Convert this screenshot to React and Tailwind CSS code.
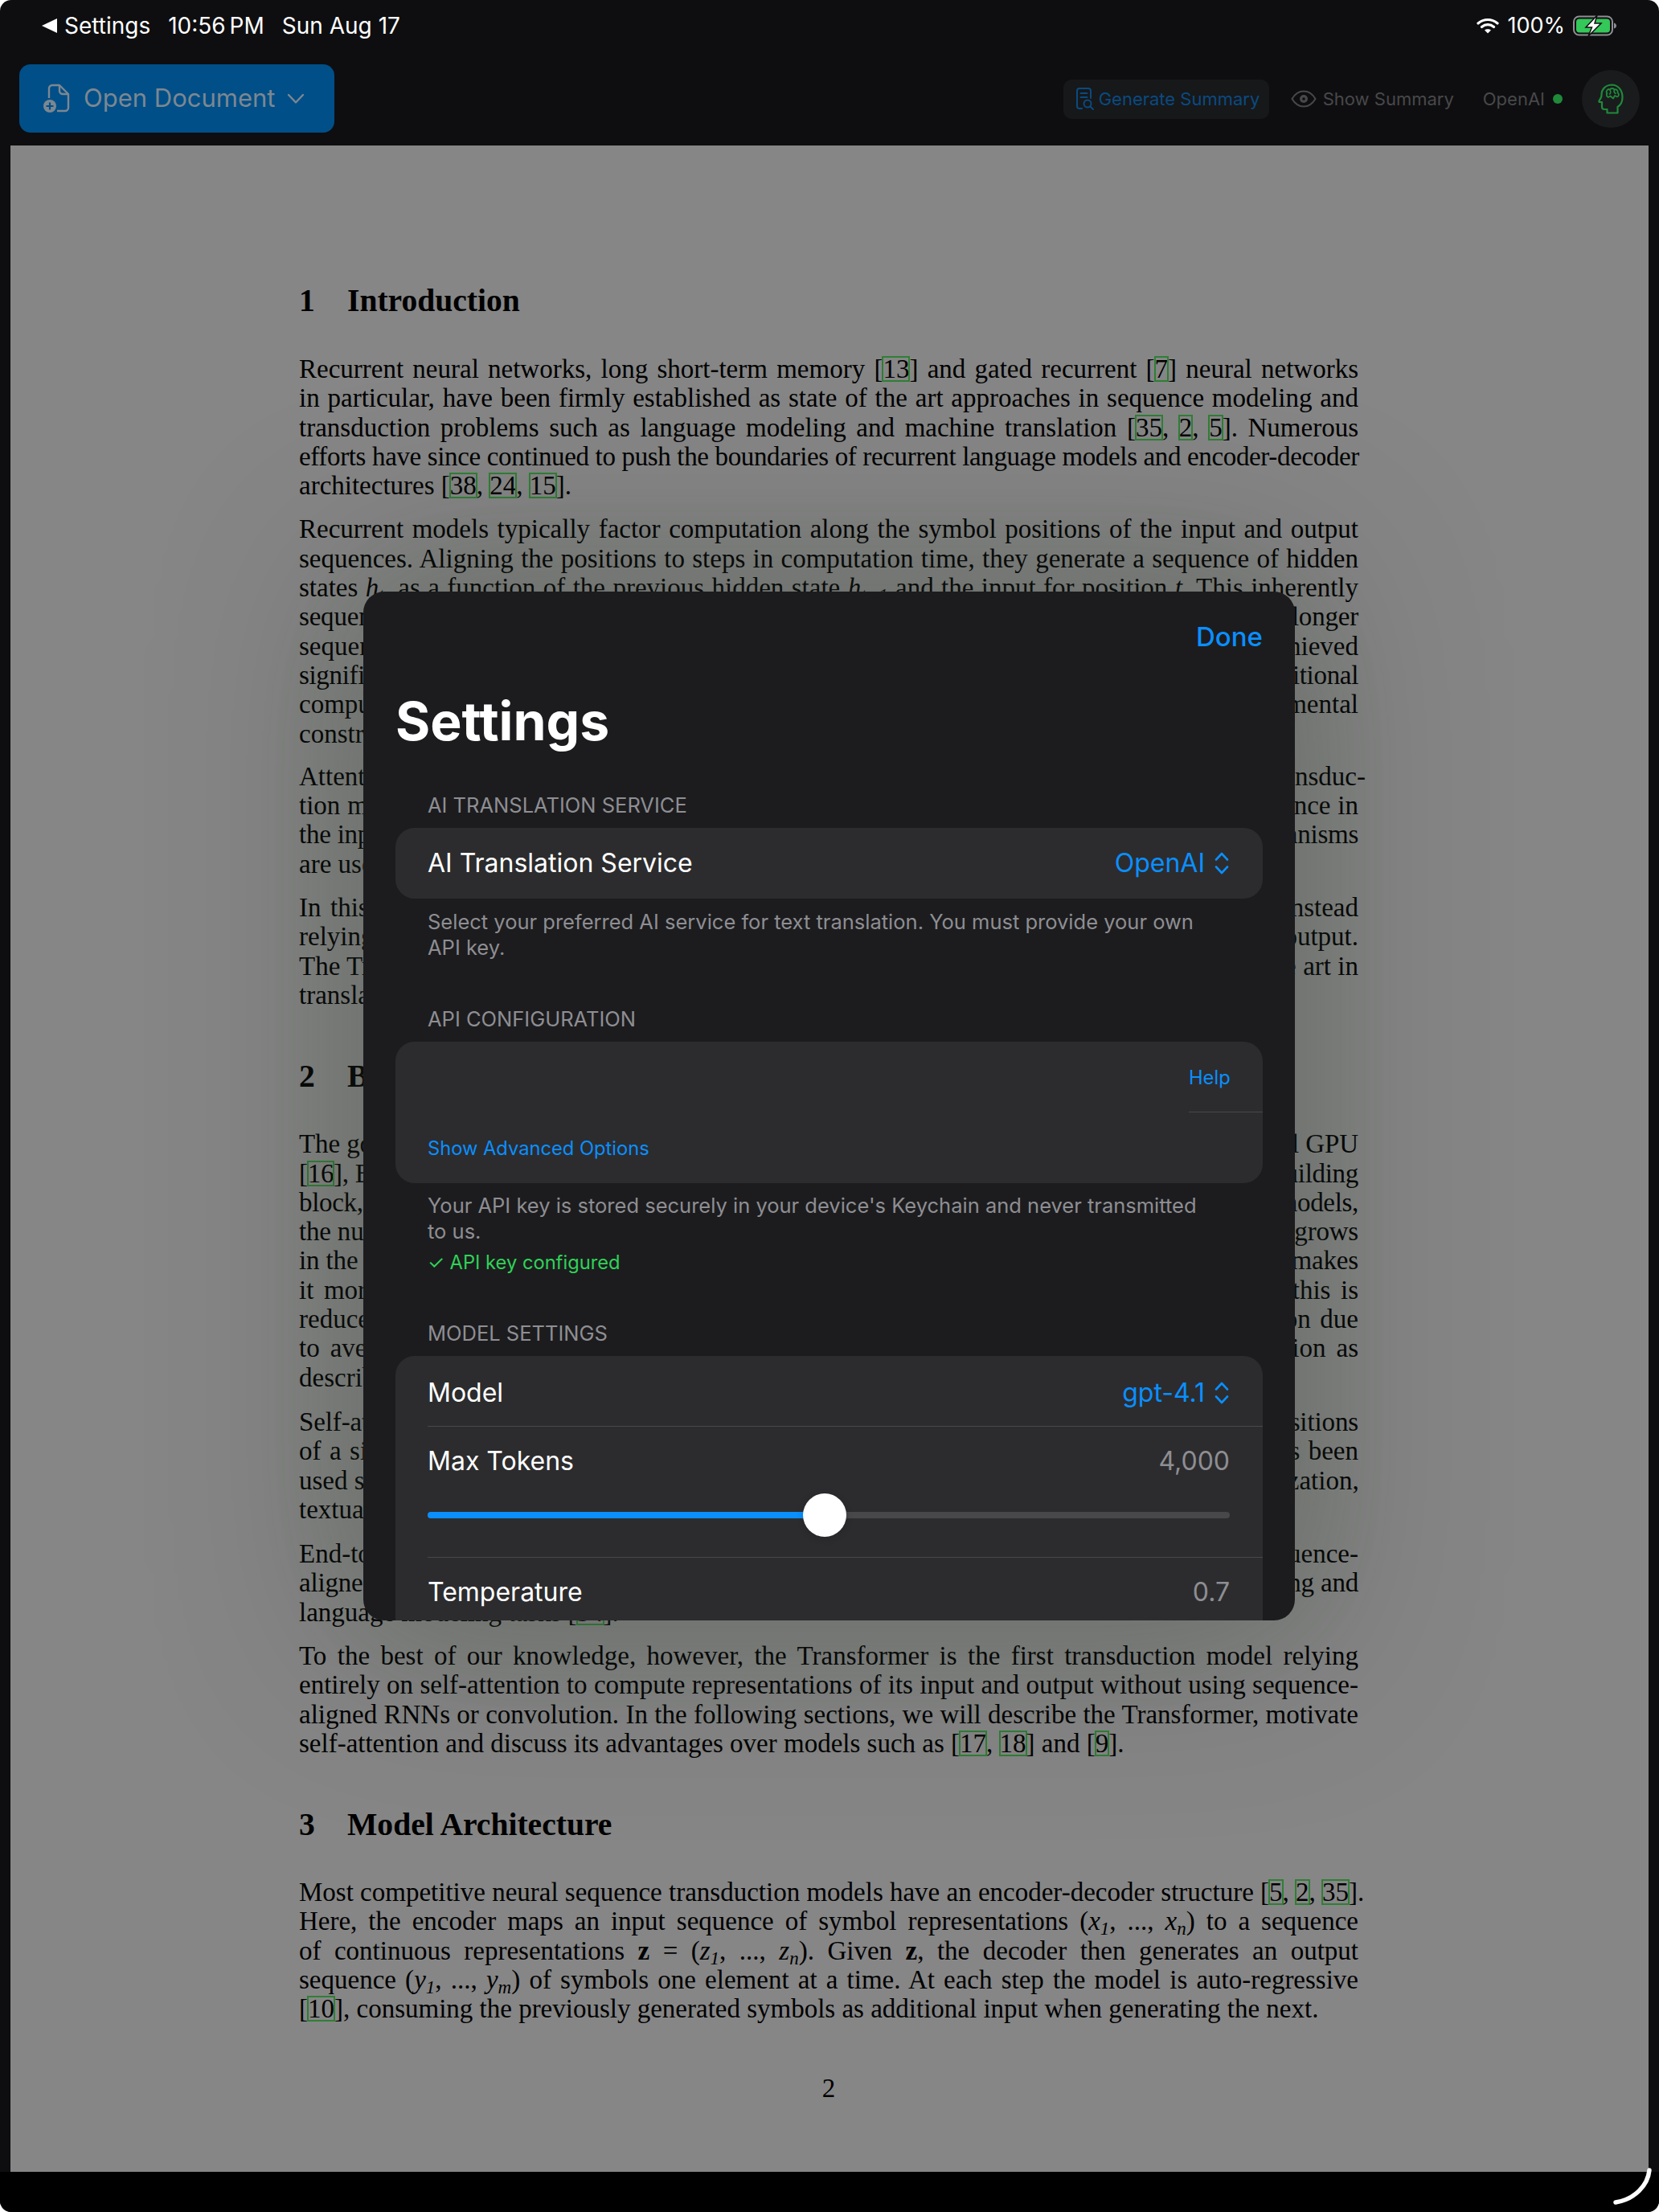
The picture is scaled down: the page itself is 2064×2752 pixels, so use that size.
import React from 'react';

// citation box as drawn by the PDF viewer
const C = ({ children }) => (
  <span className="inline-block leading-[30px] outline-2 -outline-offset-1 outline-[#2f7f35]">{children}</span>
);

const I = ({ children, sub }) => (
  <>
    <i>{children}</i>
    {sub && <sub className="text-[23px] italic">{sub}</sub>}
  </>
);

// justified line of the page, className squeezes the lines that would overflow
const L = ({ children, className = '' }) => (
  <div className={`whitespace-nowrap [text-align:justify] [text-align-last:justify] ${className}`}>{children}</div>
);

// last line of a paragraph, not stretched
const E = ({ children }) => <div className="whitespace-nowrap">{children}</div>;

const H = ({ num, children, className }) => (
  <div className={`flex text-[39.6px] font-bold leading-[46px] ${className}`}>
    <span className="w-[60px]">{num}</span>
    <span>{children}</span>
  </div>
);

const P = ({ children, className }) => <div className={className}>{children}</div>;

const DocumentPage = () => (
  <div className="flex-1 bg-[#868686] pl-[359px] pt-[170px] text-[33px] leading-[36.3px] text-black [font-family:'Liberation_Serif',serif] overflow-hidden">
    <div className="w-[1318px]">
      <H num="1">Introduction</H>
      <P className="mt-[44px]">
        <L>Recurrent neural networks, long short-term memory [<C>13</C>] and gated recurrent [<C>7</C>] neural networks</L>
        <L>in particular, have been firmly established as state of the art approaches in sequence modeling and</L>
        <L>transduction problems such as language modeling and machine translation [<C>35</C>, <C>2</C>, <C>5</C>]. Numerous</L>
        <L className="tracking-[-0.35px]">efforts have since continued to push the boundaries of recurrent language models and encoder-decoder</L>
        <E>architectures [<C>38</C>, <C>24</C>, <C>15</C>].</E>
      </P>
      <P className="mt-[18px]">
        <L>Recurrent models typically factor computation along the symbol positions of the input and output</L>
        <L>sequences. Aligning the positions to steps in computation time, they generate a sequence of hidden</L>
        <L>states <I sub="t">h</I>, as a function of the previous hidden state <I sub="t−1">h</I> and the input for position <i>t</i>. This inherently</L>
        <L className="tracking-[-0.2px]">sequential nature precludes parallelization within training examples, which becomes critical at longer</L>
        <L>sequence lengths, as memory constraints limit batching across examples. Recent work has achieved</L>
        <L className="tracking-[-0.32px]">significant improvements in computational efficiency through factorization tricks [21] and conditional</L>
        <L>computation [32], while also improving model performance in case of the latter. The fundamental</L>
        <E>constraint of sequential computation, however, remains.</E>
      </P>
      <P className="mt-[17px]">
        <L>Attention mechanisms have become an integral part of compelling sequence modeling and transduc-</L>
        <L>tion models in various tasks, allowing modeling of dependencies without regard to their distance in</L>
        <L className="tracking-[-0.25px]">the input or output sequences [2, 19]. In all but a few cases [27], however, such attention mechanisms</L>
        <E>are used in conjunction with a recurrent network.</E>
      </P>
      <P className="mt-[18px]">
        <L>In this work we propose the Transformer, a model architecture eschewing recurrence and instead</L>
        <L>relying entirely on an attention mechanism to draw global dependencies between input and output.</L>
        <L>The Transformer allows for significantly more parallelization and can reach a new state of the art in</L>
        <E>translation.</E>
      </P>
      <H num="2" className="mt-[60px]">Background</H>
      <P className="mt-[43px]">
        <L className="tracking-[-0.1px]">The goal of reducing sequential computation also forms the foundation of the Extended Neural GPU</L>
        <L className="tracking-[-0.3px]">[<C>16</C>], ByteNet [18] and ConvS2S [9], all of which use convolutional neural networks as basic building</L>
        <L className="tracking-[-0.32px]">block, computing hidden representations in parallel for all input and output positions. In these models,</L>
        <L className="tracking-[-0.2px]">the number of operations required to relate signals from two arbitrary input or output positions grows</L>
        <L className="tracking-[-0.14px]">in the distance between positions, linearly for ConvS2S and logarithmically for ByteNet. This makes</L>
        <L>it more difficult to learn dependencies between distant positions [12]. In the Transformer this is</L>
        <L>reduced to a constant number of operations, albeit at the cost of reduced effective resolution due</L>
        <L>to averaging attention-weighted positions, an effect we counteract with Multi-Head Attention as</L>
        <E>described in section 3.2.</E>
      </P>
      <P className="mt-[19px]">
        <L className="tracking-[-0.12px]">Self-attention, sometimes called intra-attention is an attention mechanism relating different positions</L>
        <L>of a single sequence in order to compute a representation of the sequence. Self-attention has been</L>
        <L>used successfully in a variety of tasks including reading comprehension, abstractive summarization,</L>
        <E>textual entailment and learning task-independent sentence representations [4, 27, 28, 22].</E>
      </P>
      <P className="mt-[19px]">
        <L>End-to-end memory networks are based on a recurrent attention mechanism instead of sequence-</L>
        <L className="tracking-[-0.2px]">aligned recurrence and have been shown to perform well on simple-language question answering and</L>
        <E>language modeling tasks [<C>34</C>].</E>
      </P>
      <P className="mt-[18px]">
        <L>To the best of our knowledge, however, the Transformer is the first transduction model relying</L>
        <L>entirely on self-attention to compute representations of its input and output without using sequence-</L>
        <L>aligned RNNs or convolution. In the following sections, we will describe the Transformer, motivate</L>
        <E>self-attention and discuss its advantages over models such as [<C>17</C>, <C>18</C>] and [<C>9</C>].</E>
      </P>
      <H num="3" className="mt-[60px]">Model Architecture</H>
      <P className="mt-[43px]">
        <L>Most competitive neural sequence transduction models have an encoder-decoder structure [<C>5</C>, <C>2</C>, <C>35</C>].</L>
        <L>Here, the encoder maps an input sequence of symbol representations (<I sub="1">x</I>, ..., <I sub="n">x</I>) to a sequence</L>
        <L>of continuous representations <b>z</b> = (<I sub="1">z</I>, ..., <I sub="n">z</I>). Given <b>z</b>, the decoder then generates an output</L>
        <L>sequence (<I sub="1">y</I>, ..., <I sub="m">y</I>) of symbols one element at a time. At each step the model is auto-regressive</L>
        <E>[<C>10</C>], consuming the previously generated symbols as additional input when generating the next.</E>
      </P>
      <div className="mt-[62px] text-center">2</div>
    </div>
  </div>
);

const DocPlusIcon = () => (
  <svg width="36" height="38" viewBox="0 0 36 38" fill="none" stroke="currentColor" strokeWidth="2.4" strokeLinejoin="round">
    <path d="M8 18V6a4 4 0 0 1 4-4h9l11 11v17a4 4 0 0 1-4 4H18" />
    <path d="M21 2v7a4 4 0 0 0 4 4h7" />
    <circle cx="9" cy="28" r="8" fill="currentColor" stroke="none" />
    <path d="M9 23.5v9M4.5 28h9" stroke="#004f88" strokeWidth="2.2" />
  </svg>
);

const DocSearchIcon = () => (
  <svg width="24" height="30" viewBox="0 0 24 30" fill="none" stroke="currentColor" strokeWidth="2" strokeLinecap="round">
    <path d="M8 27H5a3 3 0 0 1-3-3V5a3 3 0 0 1 3-3h11a3 3 0 0 1 3 3v9" />
    <path d="M6.5 8h8M6.5 13h8" />
    <circle cx="15" cy="21" r="4.5" />
    <path d="M18.5 24.5l3.5 3.5" />
  </svg>
);

const EyeIcon = () => (
  <svg width="32" height="22" viewBox="0 0 32 22" fill="none" stroke="currentColor" strokeWidth="2">
    <path d="M1.5 11C5 5 10 1.5 16 1.5S27 5 30.5 11C27 17 22 20.5 16 20.5S5 17 1.5 11z" />
    <circle cx="16" cy="11" r="5" fill="currentColor" stroke="none" />
    <circle cx="16" cy="11" r="1.8" fill="#0e0e10" stroke="none" />
  </svg>
);

const BrainHeadIcon = () => (
  <svg width="32" height="38" viewBox="0 0 32 38" fill="none" stroke="currentColor" strokeWidth="2.2" strokeLinejoin="round" strokeLinecap="round">
    <path d="M18 1.5C9.5 1.5 4.5 7 4.5 14c0 2-.4 3-1.2 4.4L1.5 21.5c-.4.8 0 1.5 1 1.5h2.5v6c0 2 1.4 3 3 3h3.5v4.5h13V29c3.5-2.2 6-6.2 6-12 0-9-5.5-15.500-13.500-15.500z" />
    <path d="M11 12c-1.500-3 1.500-6 4-4.500 1-2 4.500-2 5.500 0 2.500-1 5 1.500 4 4 2 1 2 4-.5 5l-3-1.500-2 3.500-3.500-3-2.500 1.500c-2-.5-3-3.500-1.500-5z" strokeWidth="1.8" />
    <path d="M15 8.500c1.500 1.500 1 3.500-.5 4.500M20.500 8c-1 2 0 3.500 1.500 4.500" strokeWidth="1.6" />
  </svg>
);

const Chevrons = () => (
  <svg width="20" height="30" viewBox="0 0 20 30" fill="none" stroke="currentColor" strokeWidth="2.6" strokeLinecap="round" strokeLinejoin="round">
    <path d="M3 10.500L10 3l7 7.500M3 19.500L10 27l7-7.500" />
  </svg>
);

const StatusBar = () => (
  <div className="flex h-[64px] items-center justify-between pl-[52px] pr-[52px] text-[28px] text-white">
    <div className="flex items-center">
      <svg width="19" height="18" viewBox="0 0 19 18" className="mr-[9px]">
        <path d="M0 9L19 0v18z" fill="#fff" />
      </svg>
      <span>Settings</span>
      <span className="ml-[22px] [word-spacing:-3px]">10:56 PM</span>
      <span className="ml-[22px]">Sun Aug 17</span>
    </div>
    <div className="flex items-center">
      <svg width="28" height="20" viewBox="0 0 28 20" fill="none" stroke="#fff" strokeWidth="3.200" strokeLinecap="round">
        <path d="M2 7c7-6 17-6 24 0M6.500 11.500c4.500-3.800 10.500-3.800 15 0" />
        <path d="M14 19.500l-4-4c2.300-1.800 5.700-1.800 8 0z" fill="#fff" stroke="none" />
      </svg>
      <span className="ml-[10px] text-[27px]">100%</span>
      <svg width="55" height="26" viewBox="0 0 55 26" className="ml-[10px]">
        <rect x="1" y="1.500" width="48" height="23" rx="6.500" fill="none" stroke="#8e8e93" strokeWidth="2" />
        <rect x="4" y="4.500" width="42" height="17" rx="4" fill="#34c759" />
        <path d="M51 9.500c2 .5 3 2 3 3.500s-1 3-3 3.500z" fill="#8e8e93" />
        <path d="M30 0L16 15h7.500L19 26l16-16h-8z" fill="#fff" stroke="#0e0e10" strokeWidth="1.500" />
      </svg>
    </div>
  </div>
);

const Toolbar = () => (
  <div className="flex h-[117px] items-start justify-between pl-[24px] pr-[24px] pt-[16px]">
    <div className="flex h-[85px] w-[392px] items-center rounded-[14px] bg-[#004f88] pl-[29px] text-[#7c8791]">
      <DocPlusIcon />
      <span className="ml-[15px] text-[31px]">Open Document</span>
      <svg width="22" height="14" viewBox="0 0 22 14" fill="none" stroke="currentColor" strokeWidth="2.400" strokeLinecap="round" strokeLinejoin="round" className="ml-[15px]">
        <path d="M2 2l9 9.500L20 2" />
      </svg>
    </div>
    <div className="mt-[7px] flex h-[72px] items-center text-[22px]">
      <div className="flex h-[49px] w-[256px] items-center rounded-[10px] bg-[#17181a] pl-[15px] text-[#0a4a80]">
        <DocSearchIcon />
        <span className="ml-[5px]">Generate Summary</span>
      </div>
      <div className="ml-[27px] flex items-center text-[#48484a]">
        <EyeIcon />
        <span className="ml-[8px]">Show Summary</span>
      </div>
      <span className="ml-[36px] text-[#48484a]">OpenAI</span>
      <span className="ml-[10px] h-[12px] w-[12px] rounded-full bg-[#1f8a3a]" />
      <div className="ml-[24px] flex h-[72px] w-[72px] items-center justify-center rounded-full bg-[#1a1b1d] text-[#1f8a3a]">
        <BrainHeadIcon />
      </div>
    </div>
  </div>
);

const SectionHeader = ({ children, className }) => (
  <div className={`mb-[11px] h-[34px] pl-[40px] text-[25.500px] leading-[34px] text-[#8e8e93] ${className}`}>{children}</div>
);

const Footnote = ({ children, className }) => (
  <div className={`pl-[40px] pr-[60px] text-[25.500px] leading-[32px] text-[#8e8e93] ${className}`}>{children}</div>
);

const Picker = ({ value }) => (
  <div className="flex items-center gap-[11px] text-[#0a8fff]">
    <span>{value}</span>
    <Chevrons />
  </div>
);

const SettingsModal = () => (
  <div className="absolute left-[452px] top-[736px] h-[1280px] w-[1159px] overflow-hidden rounded-[26px] bg-[#1c1c1e] px-[40px] shadow-[0_0_220px_30px_rgba(50,62,50,0.38)]">
    <div className="flex h-[114px] items-center justify-end text-[33px] font-medium text-[#0a8fff]">Done</div>
    <div className="h-[94px] text-[66px] font-bold leading-[94px] text-white">Settings</div>

    <SectionHeader className="mt-[41px]">AI TRANSLATION SERVICE</SectionHeader>
    <div className="flex h-[88px] items-center justify-between rounded-[24px] bg-[#2c2c2e] pl-[40px] pr-[41px] text-[32px] text-white">
      <span>AI Translation Service</span>
      <Picker value="OpenAI" />
    </div>
    <Footnote className="mt-[13px]">Select your preferred AI service for text translation. You must provide your own API key.</Footnote>

    <SectionHeader className="mt-[56px]">API CONFIGURATION</SectionHeader>
    <div className="h-[176px] rounded-[24px] bg-[#2c2c2e] text-[23.700px] text-[#0a8fff]">
      <div className="flex justify-end">
        <div className="flex h-[88px] w-[92px] items-center border-b border-[#48484a] pt-[3px]">Help</div>
      </div>
      <div className="flex h-[88px] items-center pl-[40px] pt-[1px]">Show Advanced Options</div>
    </div>
    <Footnote className="mt-[12px]">Your API key is stored securely in your device's Keychain and never transmitted to us.</Footnote>
    <div className="mt-[7px] h-[32px] pl-[40px] text-[23.700px] leading-[32px] text-[#30d158]">✓ API key configured</div>

    <SectionHeader className="mt-[55px]">MODEL SETTINGS</SectionHeader>
    <div className="h-[400px] rounded-[24px] bg-[#2c2c2e] pl-[40px] text-[32px] text-white">
      <div className="flex h-[88px] items-center justify-between border-b border-[#48484a] pr-[41px] pt-[4px]">
        <span>Model</span>
        <Picker value="gpt-4.1" />
      </div>
      <div className="h-[163px] border-b border-[#48484a] pr-[41px]">
        <div className="flex h-[86px] items-center justify-between">
          <span>Max Tokens</span>
          <span className="text-[#8e8e93]">4,000</span>
        </div>
        <div className="relative mt-[20px] h-[8px] rounded-full bg-[#48484a]">
          <div className="h-full w-[49.500%] rounded-full bg-[#0a8fff]" />
          <div className="absolute left-[49.500%] top-1/2 h-[54px] w-[54px] -translate-x-1/2 -translate-y-1/2 rounded-full bg-white shadow-[0_2px_10px_rgba(0,0,0,0.15)]" />
        </div>
      </div>
      <div className="flex h-[86px] items-center justify-between pr-[41px]">
        <span>Temperature</span>
        <span className="text-[#8e8e93]">0.7</span>
      </div>
    </div>
  </div>
);

export default function App() {
  return (
    <div className="h-[2752px] w-[2064px] bg-white [font-family:Inter,sans-serif]">
      <div className="relative flex h-full w-full flex-col overflow-hidden rounded-[14px] bg-[#0e0e10]">
        <StatusBar />
        <Toolbar />
        <div className="flex flex-1 overflow-hidden px-[13px]">
          <DocumentPage />
        </div>
        {/* bottom strip with the pencil scribble in the corner */}
        <div className="flex h-[50px] items-start justify-end bg-black pr-[8px]">
          <svg width="50" height="46" viewBox="0 0 50 46" fill="none" stroke="#fff" strokeWidth="5.500" strokeLinecap="round" className="-mt-[5px]">
            <path d="M46 3C44 22 28 39 4 43" />
          </svg>
        </div>
        <SettingsModal />
      </div>
    </div>
  );
}
